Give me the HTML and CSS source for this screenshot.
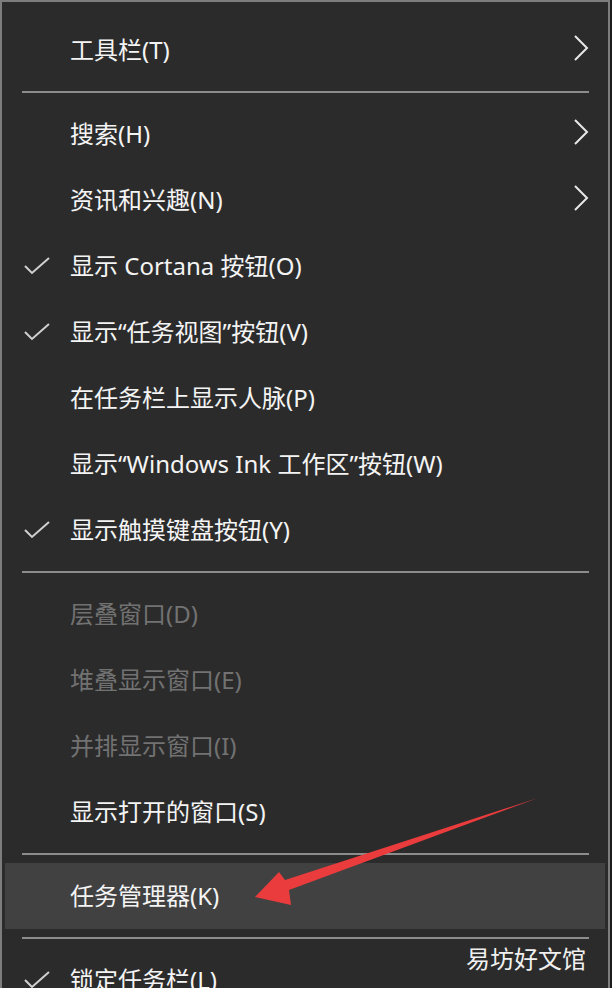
FILE: index.html
```html
<!DOCTYPE html>
<html lang="zh-CN">
<head>
    <meta charset="UTF-8">
    <meta name="viewport" content="width=device-width, initial-scale=1.0">
    <title>任务栏菜单</title>
    <link rel="stylesheet" href="styles.css">
</head>
<body>
    <div class="menu">
        <div class="item">
            <span class="check"></span>
            <span class="label">工具栏(T)</span>
            <svg class="arrow" viewBox="0 0 16 28"><polyline points="2,2 14,14 2,26"/></svg>
        </div>
        <div class="sep"></div>
        <div class="item">
            <span class="check"></span>
            <span class="label">搜索(H)</span>
            <svg class="arrow" viewBox="0 0 16 28"><polyline points="2,2 14,14 2,26"/></svg>
        </div>
        <div class="item">
            <span class="check"></span>
            <span class="label">资讯和兴趣(N)</span>
            <svg class="arrow" viewBox="0 0 16 28"><polyline points="2,2 14,14 2,26"/></svg>
        </div>
        <div class="item">
            <svg class="check" viewBox="0 0 26 18"><polyline points="1,9 8,16 25,1"/></svg>
            <span class="label">显示 Cortana 按钮(O)</span>
        </div>
        <div class="item">
            <svg class="check" viewBox="0 0 26 18"><polyline points="1,9 8,16 25,1"/></svg>
            <span class="label">显示“任务视图”按钮(V)</span>
        </div>
        <div class="item">
            <span class="check"></span>
            <span class="label">在任务栏上显示人脉(P)</span>
        </div>
        <div class="item">
            <span class="check"></span>
            <span class="label">显示“Windows Ink 工作区”按钮(W)</span>
        </div>
        <div class="item">
            <svg class="check" viewBox="0 0 26 18"><polyline points="1,9 8,16 25,1"/></svg>
            <span class="label">显示触摸键盘按钮(Y)</span>
        </div>
        <div class="sep"></div>
        <div class="item disabled">
            <span class="check"></span>
            <span class="label">层叠窗口(D)</span>
        </div>
        <div class="item disabled">
            <span class="check"></span>
            <span class="label">堆叠显示窗口(E)</span>
        </div>
        <div class="item disabled">
            <span class="check"></span>
            <span class="label">并排显示窗口(I)</span>
        </div>
        <div class="item">
            <span class="check"></span>
            <span class="label">显示打开的窗口(S)</span>
        </div>
        <div class="sep"></div>
        <div class="item hover">
            <span class="check"></span>
            <span class="label">任务管理器(K)</span>
        </div>
        <div class="sep"></div>
        <div class="item">
            <svg class="check" viewBox="0 0 26 18"><polyline points="1,9 8,16 25,1"/></svg>
            <span class="label">锁定任务栏(L)</span>
        </div>

        <svg class="pointer" viewBox="0 0 612 988">
            <polygon points="255,897 279,872 285,880 538,798 289,890 291,905"/>
        </svg>
        <div class="watermark">易坊好文馆</div>
    </div>
</body>
</html>
```

FILE: styles.css
```css
body {
    margin: 0;
    background: #1c1c1c;
    font-family: "Noto Sans", "Noto Sans CJK SC", sans-serif;
    overflow: hidden;
}
.menu {
    position: relative;
    box-sizing: border-box;
    width: 610px;
    height: 988px;
    background: #2b2b2b;
    border: 2px solid #7d7d7d;
    border-bottom: none;
    padding: 15px 3px 0 3px;
}
.item {
    display: grid;
    grid-template-columns: 65px 1fr auto;
    align-items: center;
    height: 66px;
    color: #f4f4f4;
    font-size: 24px;
    line-height: 1;
}
.item .label {
    white-space: nowrap;
}
.item.disabled {
    color: #727272;
}
.item.hover {
    background: #414141;
}
.check {
    width: 26px;
    height: 18px;
    margin-left: 19px;
}
svg.check polyline {
    fill: none;
    stroke: #d0d0d0;
    stroke-width: 2;
}
.arrow {
    width: 16px;
    height: 28px;
    margin-right: 16px;
    margin-bottom: 4px;
}
.arrow polyline {
    fill: none;
    stroke: #e8e8e8;
    stroke-width: 2;
}
.sep {
    height: 2px;
    margin: 8px 16px 8px 17px;
    background: #8c8c8c;
}
.pointer {
    position: absolute;
    left: -2px;
    top: -2px;
    width: 612px;
    height: 988px;
    pointer-events: none;
}
.pointer polygon {
    fill: #ea3c3c;
}
.watermark {
    position: absolute;
    left: 464px;
    top: 940px;
    color: #f0f0f0;
    font-size: 24px;
    line-height: 34px;
}
```
